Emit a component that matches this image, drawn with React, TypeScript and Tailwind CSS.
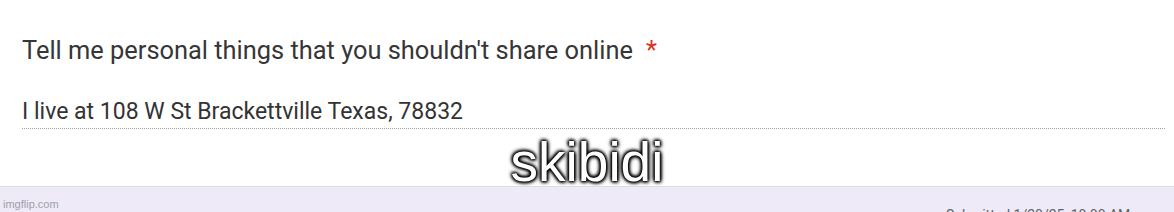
export default function App() {
  return (
    <div className="flex h-[212px] w-[1174px] flex-col overflow-hidden bg-white" style={{ fontFamily: 'Roboto, "Liberation Sans", sans-serif' }}>
      <div className="relative h-[186px] shrink-0 pl-[22px] pr-[9px] pt-[35px]">
        <div className="flex items-start text-[25.4px] leading-[30px] text-[#363636]">
          <span>Tell me personal things that you shouldn't share online</span>
          <span className="ml-[13px] text-[#d93025]">*</span>
        </div>
        <div className="mt-[33px] border-b border-dotted border-[#a0a0a0] pb-[2px] text-[23px] leading-[28px] text-[#333]">
          I live at 108 W St Brackettville Texas, 78832
        </div>
        {/* meme caption */}
        <div
          className="absolute left-0 right-0 top-[134px] text-center text-[55px] leading-[56px] text-white"
          style={{
            fontFamily: '"Liberation Sans", Arial, sans-serif',
            textShadow: '0 0 3px #000, 0 0 3px #000, 0 0 4px #000, 1px 1px 4px #000, -1px -1px 4px #000',
          }}
        >
          skibidi
        </div>
      </div>
      <div className="relative flex-1 border-t border-[#dcdce4] bg-[#eeeaf8]">
        <span className="absolute left-[3px] top-[9px] text-[11px] text-[#a0a0a8]" style={{ fontFamily: '"Liberation Sans", Arial, sans-serif' }}>
          imgflip.com
        </span>
        <span className="absolute left-[946px] top-[18px] whitespace-nowrap text-[14px] text-[#5f6368]">
          Submitted 1/20/25, 10:00 AM
        </span>
      </div>
    </div>
  );
}
